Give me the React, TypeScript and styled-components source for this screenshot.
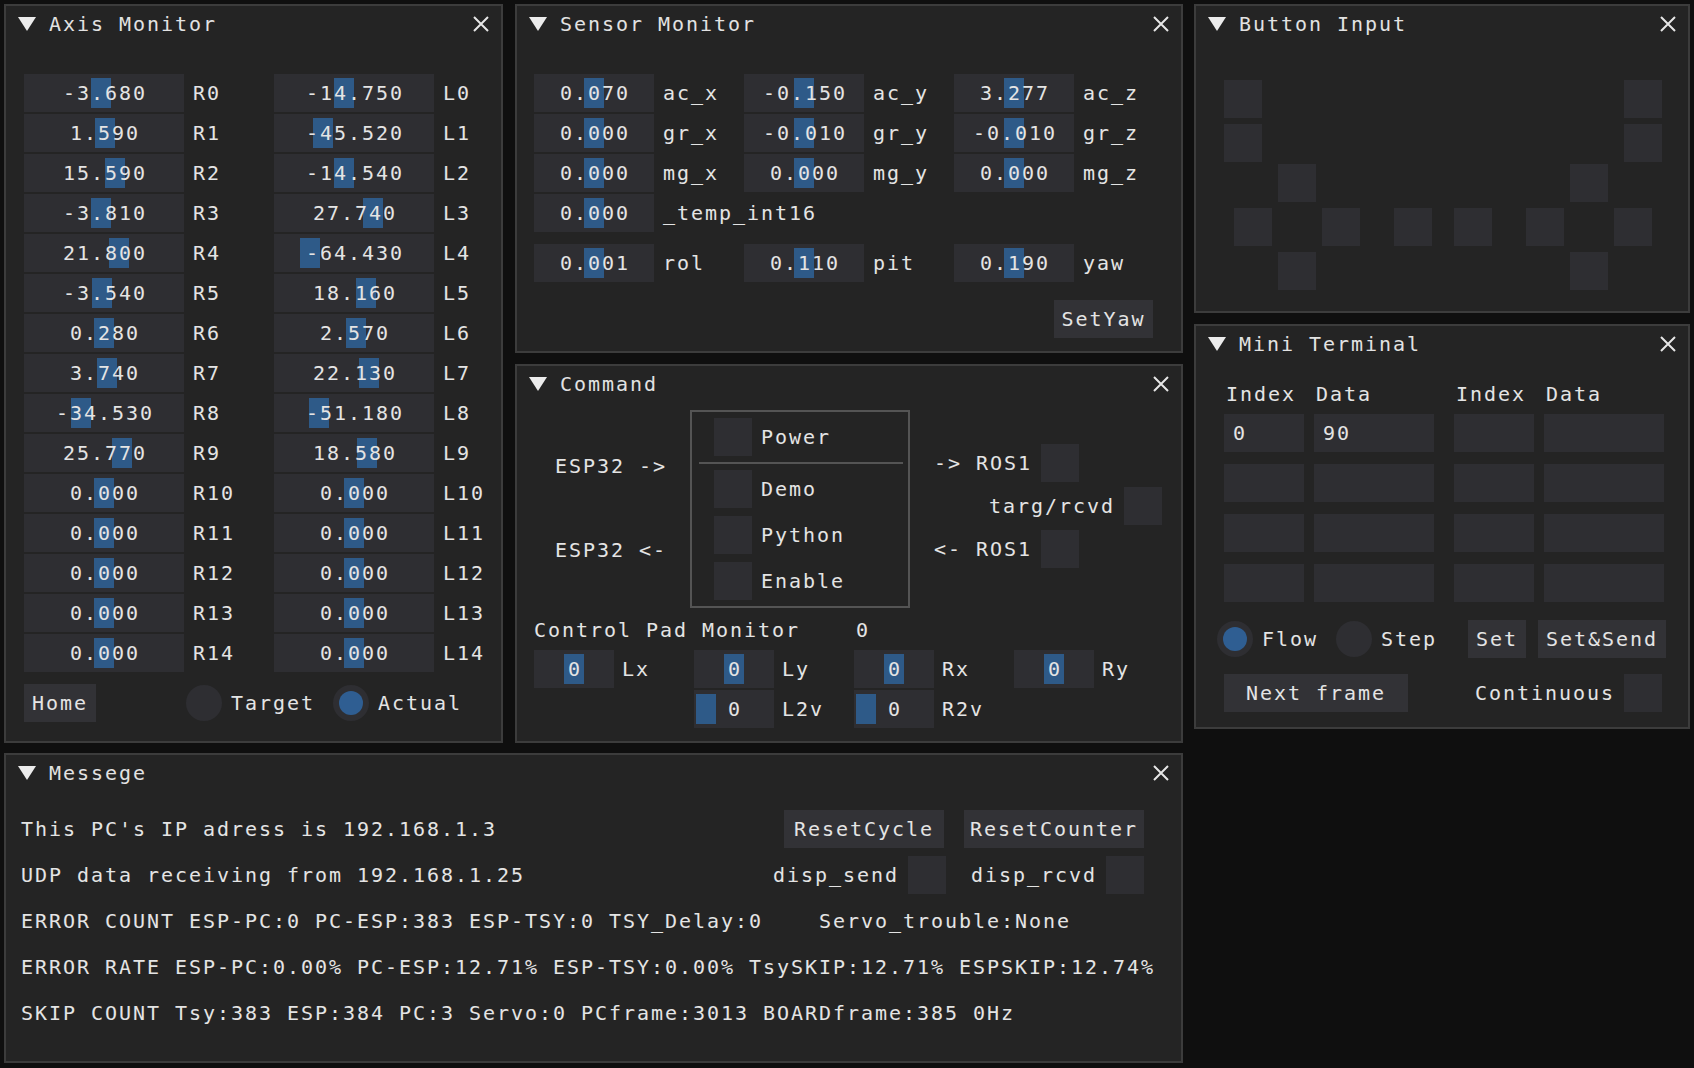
import React from "react";
import styled, { createGlobalStyle } from "styled-components";

const GlobalStyle = createGlobalStyle`
  html, body { margin: 0; padding: 0; background: #0f0f0f; }
  body {
    font-family: "DejaVu Sans Mono", "Liberation Mono", monospace;
    font-size: 20px;
    letter-spacing: 1.96px;
    color: #e4e4e4;
  }
  * { box-sizing: border-box; }
`;

// ---- data ----
const rightAxis = [-3.68, 1.59, 15.59, -3.81, 21.8, -3.54, 0.28, 3.74, -34.53, 25.77, 0, 0, 0, 0, 0];
const leftAxis = [-14.75, -45.52, -14.54, 27.74, -64.43, 18.16, 2.57, 22.13, -51.18, 18.58, 0, 0, 0, 0, 0];

const sensorRows: [number, string][][] = [
  [[0.07, "ac_x"], [-0.15, "ac_y"], [3.277, "ac_z"]],
  [[0, "gr_x"], [-0.01, "gr_y"], [-0.01, "gr_z"]],
  [[0, "mg_x"], [0, "mg_y"], [0, "mg_z"]],
  [[0, "_temp_int16"]],
];
const attitude: [number, string][] = [[0.001, "rol"], [0.11, "pit"], [0.19, "yaw"]];

// gamepad layout, coordinates inside the Button Input body
const padButtons = [
  [28, 38], [28, 82], [428, 38], [428, 82],
  [82, 122], [374, 122],
  [38, 166], [126, 166], [198, 166], [258, 166], [330, 166], [418, 166],
  [82, 210], [374, 210],
];

const fmt = (v: number) => (Object.is(v, -0) ? 0 : v).toFixed(3);

// ---- layout ----
const Screen = styled.div`
  width: 1694px;
  height: 1068px;
  padding: 4px;
  display: flex;
  gap: 11px;
`;

const Column = styled.div<{ $gap: number }>`
  display: flex;
  flex-direction: column;
  gap: ${(p) => p.$gap}px;
`;

const Row = styled.div<{ $gap: number }>`
  display: flex;
  gap: ${(p) => p.$gap}px;
`;

const Window = styled.section<{ $w: number; $h: number }>`
  width: ${(p) => p.$w}px;
  height: ${(p) => p.$h}px;
  background: #242424;
  border: 2px solid #3c3c3c;
  display: flex;
  flex-direction: column;
  overflow: hidden;
`;

const TitleBar = styled.div`
  height: 36px;
  flex: none;
  display: flex;
  align-items: center;
  padding: 0 12px 0 12px;
`;

const TitleText = styled.span`
  flex: 1;
  margin-left: 13px;
  color: #e2e2e2;
`;

const Body = styled.div<{ $pad: string }>`
  flex: 1;
  padding: ${(p) => p.$pad};
  position: relative;
`;

const Collapse = () => (
  <svg width="18" height="14" viewBox="0 0 18 14">
    <polygon points="0,0 18,0 9,14" fill="#ececec" />
  </svg>
);

const CloseIcon = () => (
  <svg width="16" height="16" viewBox="0 0 16 16">
    <path d="M1 1 L15 15 M15 1 L1 15" stroke="#e6e6e6" strokeWidth="2" />
  </svg>
);

const Panel: React.FC<{ title: string; w: number; h: number; pad: string; children: React.ReactNode }> = ({
  title, w, h, pad, children,
}) => (
  <Window $w={w} $h={h}>
    <TitleBar>
      <Collapse />
      <TitleText>{title}</TitleText>
      <CloseIcon />
    </TitleBar>
    <Body $pad={pad}>{children}</Body>
  </Window>
);

// ---- widgets ----
const Field = styled.div<{ $w: number }>`
  position: relative;
  width: ${(p) => p.$w}px;
  height: 38px;
  flex: none;
  background: #2e2e32;
  display: flex;
  align-items: center;
  justify-content: center;
  white-space: pre;
`;

const Grab = styled.div`
  position: absolute;
  top: 4px;
  bottom: 4px;
  width: 20px;
  background: #2e5a88;
`;

const FieldText = styled.span`
  position: relative;
  margin-right: -1.96px;
`;

const Slider: React.FC<{ w: number; frac: number; text: string }> = ({ w, frac, text }) => (
  <Field $w={w}>
    <Grab style={{ left: Math.round(2 + frac * (w - 24)) }} />
    <FieldText>{text}</FieldText>
  </Field>
);

const LabeledCell = styled.div<{ $gap: number }>`
  display: flex;
  align-items: center;
  gap: ${(p) => p.$gap}px;
  white-space: pre;
`;

const Button = styled.div<{ $w: number }>`
  width: ${(p) => p.$w}px;
  height: 38px;
  flex: none;
  background: #323236;
  display: flex;
  align-items: center;
  justify-content: center;
  white-space: pre;
`;

const Check = styled.div`
  width: 38px;
  height: 38px;
  flex: none;
  background: #2e2e32;
`;

const RadioDot = styled.span<{ $on?: boolean }>`
  width: 36px;
  height: 36px;
  flex: none;
  border-radius: 50%;
  background: #2e2e32;
  display: flex;
  align-items: center;
  justify-content: center;
  &::after {
    content: "";
    width: 24px;
    height: 24px;
    border-radius: 50%;
    background: ${(p) => (p.$on ? "#2f5e92" : "transparent")};
  }
`;

const RadioItem = styled.div`
  display: flex;
  align-items: center;
  gap: 9px;
`;

const Line = styled.div`
  height: 38px;
  display: flex;
  align-items: center;
  white-space: pre;
`;

// ---- Axis Monitor ----
const AxisGrid = styled.div`
  display: grid;
  grid-template-columns: 250px auto;
  row-gap: 2px;
`;

const AxisFooter = styled.div`
  margin-top: 12px;
  height: 38px;
  display: flex;
  align-items: center;
`;

const RadioGroup = styled.div`
  margin-left: 90px;
  display: flex;
  align-items: center;
  gap: 18px;
`;

const AxisMonitor = () => (
  <Panel title="Axis Monitor" w={499} h={739} pad="32px 0 0 18px">
    <AxisGrid>
      {rightAxis.map((r, i) => (
        <React.Fragment key={i}>
          <LabeledCell $gap={9}>
            <Slider w={160} frac={(r + 100) / 200} text={fmt(r)} />
            <span>R{i}</span>
          </LabeledCell>
          <LabeledCell $gap={9}>
            <Slider w={160} frac={(leftAxis[i] + 100) / 200} text={fmt(leftAxis[i])} />
            <span>L{i}</span>
          </LabeledCell>
        </React.Fragment>
      ))}
    </AxisGrid>
    <AxisFooter>
      <Button $w={72}>Home</Button>
      <RadioGroup>
        <RadioItem>
          <RadioDot />
          <span>Target</span>
        </RadioItem>
        <RadioItem>
          <RadioDot $on />
          <span>Actual</span>
        </RadioItem>
      </RadioGroup>
    </AxisFooter>
  </Panel>
);

// ---- Sensor Monitor ----
const SensorGrid = styled.div<{ $top?: number }>`
  display: grid;
  grid-template-columns: 210px 210px 210px;
  row-gap: 2px;
  margin-top: ${(p) => p.$top ?? 0}px;
`;

const RightActions = styled.div`
  margin-top: 18px;
  display: flex;
  justify-content: flex-end;
`;

const SensorCell: React.FC<{ v: number; label: string }> = ({ v, label }) => (
  <LabeledCell $gap={9}>
    <Slider w={120} frac={0.5} text={fmt(v)} />
    <span>{label}</span>
  </LabeledCell>
);

const SensorMonitor = () => (
  <Panel title="Sensor Monitor" w={668} h={349} pad="32px 28px 0 17px">
    <SensorGrid>
      {sensorRows.flatMap((row, r) =>
        row.map(([v, label], c) => <SensorCell key={`${r}-${c}`} v={v} label={label} />).concat(
          row.length < 3 ? [<div key={`${r}-pad1`} />, <div key={`${r}-pad2`} />] : []
        )
      )}
    </SensorGrid>
    <SensorGrid $top={12}>
      {attitude.map(([v, label]) => (
        <SensorCell key={label} v={v} label={label} />
      ))}
    </SensorGrid>
    <RightActions>
      <Button $w={99}>SetYaw</Button>
    </RightActions>
  </Panel>
);

// ---- Command ----
const CommandTop = styled.div`
  display: flex;
  align-items: flex-start;
`;

const ArrowCol = styled.div`
  width: 156px;
  padding: 37px 0 0 21px;
  display: flex;
  flex-direction: column;
  gap: 46px;
`;

const ModeBox = styled.div`
  width: 220px;
  height: 198px;
  border: 2px solid #545454;
  padding: 6px 5px 0 22px;
  display: flex;
  flex-direction: column;
`;

const ModeList = styled.div`
  display: flex;
  flex-direction: column;
  gap: 8px;
`;

const Separator = styled.div`
  height: 2px;
  margin: 6px 0 6px -15px;
  background: #545454;
`;

const RosCol = styled.div`
  margin: 34px 0 0 24px;
  display: flex;
  flex-direction: column;
  gap: 5px;
`;

const RosLine = styled.div<{ $indent?: number }>`
  height: 38px;
  display: flex;
  align-items: center;
  gap: 9px;
  padding-left: ${(p) => p.$indent ?? 0}px;
  white-space: pre;
`;

const PadTitle = styled.div`
  margin-top: 7px;
  height: 30px;
  display: flex;
  align-items: center;
  white-space: pre;
`;

const PadGrid = styled.div`
  margin-top: 5px;
  display: grid;
  grid-template-columns: repeat(4, 160px);
  row-gap: 2px;
`;

const PadCell = styled(LabeledCell)<{ $col?: number }>`
  grid-column: ${(p) => p.$col ?? "auto"};
`;

const ModeItem: React.FC<{ label: string }> = ({ label }) => (
  <LabeledCell $gap={9}>
    <Check />
    <span>{label}</span>
  </LabeledCell>
);

const Command = () => (
  <Panel title="Command" w={668} h={379} pad="8px 0 0 17px">
    <CommandTop>
      <ArrowCol>
        <Line>ESP32 -&gt;</Line>
        <Line>ESP32 &lt;-</Line>
      </ArrowCol>
      <ModeBox>
        <ModeItem label="Power" />
        <Separator />
        <ModeList>
          <ModeItem label="Demo" />
          <ModeItem label="Python" />
          <ModeItem label="Enable" />
        </ModeList>
      </ModeBox>
      <RosCol>
        <RosLine>
          <span>-&gt; ROS1</span>
          <Check />
        </RosLine>
        <RosLine $indent={55}>
          <span>targ/rcvd</span>
          <Check />
        </RosLine>
        <RosLine>
          <span>&lt;- ROS1</span>
          <Check />
        </RosLine>
      </RosCol>
    </CommandTop>
    <PadTitle>{"Control Pad Monitor    0"}</PadTitle>
    <PadGrid>
      {["Lx", "Ly", "Rx", "Ry"].map((l) => (
        <PadCell key={l} $gap={8}>
          <Slider w={80} frac={0.5} text="0" />
          <span>{l}</span>
        </PadCell>
      ))}
      <PadCell $gap={8} $col={2}>
        <Slider w={80} frac={0} text="0" />
        <span>L2v</span>
      </PadCell>
      <PadCell $gap={8} $col={3}>
        <Slider w={80} frac={0} text="0" />
        <span>R2v</span>
      </PadCell>
    </PadGrid>
  </Panel>
);

// ---- Button Input ----
const PadKey = styled.div<{ $x: number; $y: number }>`
  position: absolute;
  left: ${(p) => p.$x}px;
  top: ${(p) => p.$y}px;
  width: 38px;
  height: 38px;
  background: #2e2e32;
`;

const ButtonInput = () => (
  <Panel title="Button Input" w={496} h={309} pad="0">
    {padButtons.map(([x, y], i) => (
      <PadKey key={i} $x={x} $y={y} />
    ))}
  </Panel>
);

// ---- Mini Terminal ----
const TermGrid = styled.div`
  display: grid;
  grid-template-columns: 80px 120px 90px 120px;
  column-gap: 10px;
  row-gap: 12px;
`;

const TermHead = styled.div<{ $end?: boolean }>`
  height: 30px;
  width: ${(p) => (p.$end ? "80px" : "auto")};
  justify-self: ${(p) => (p.$end ? "end" : "stretch")};
  display: flex;
  align-items: center;
  padding-left: 2px;
`;

const TermField = styled.div<{ $end?: boolean }>`
  height: 38px;
  width: ${(p) => (p.$end ? "80px" : "auto")};
  justify-self: ${(p) => (p.$end ? "end" : "stretch")};
  background: #2e2e32;
  display: flex;
  align-items: center;
  padding-left: 9px;
`;

const TermHeader = styled(TermGrid)`
  margin-bottom: 5px;
`;

const TermRadioRow = styled.div`
  margin: 18px 0 0 -7px;
  height: 38px;
  display: flex;
  align-items: center;
`;

const TermRadios = styled.div`
  display: flex;
  align-items: center;
  gap: 18px;
  margin-right: 31px;
`;

const TermButtons = styled.div`
  display: flex;
  gap: 12px;
`;

const TermFooter = styled.div`
  margin-top: 16px;
  width: 438px;
  display: flex;
  justify-content: space-between;
  align-items: center;
`;

const termRows = [
  ["0", "90", "", ""],
  ["", "", "", ""],
  ["", "", "", ""],
  ["", "", "", ""],
];

const MiniTerminal = () => (
  <Panel title="Mini Terminal" w={496} h={405} pad="17px 0 0 28px">
    <TermHeader>
      <TermHead>Index</TermHead>
      <TermHead>Data</TermHead>
      <TermHead $end>Index</TermHead>
      <TermHead>Data</TermHead>
    </TermHeader>
    <TermGrid>
      {termRows.flatMap((row, r) =>
        row.map((v, c) => (
          <TermField key={`${r}-${c}`} $end={c === 2}>
            {v}
          </TermField>
        ))
      )}
    </TermGrid>
    <TermRadioRow>
      <TermRadios>
        <RadioItem>
          <RadioDot $on />
          <span>Flow</span>
        </RadioItem>
        <RadioItem>
          <RadioDot />
          <span>Step</span>
        </RadioItem>
      </TermRadios>
      <TermButtons>
        <Button $w={58}>Set</Button>
        <Button $w={128}>Set&amp;Send</Button>
      </TermButtons>
    </TermRadioRow>
    <TermFooter>
      <Button $w={184}>Next frame</Button>
      <LabeledCell $gap={9}>
        <span>Continuous</span>
        <Check />
      </LabeledCell>
    </TermFooter>
  </Panel>
);

// ---- Messege ----
const MsgList = styled.div`
  display: flex;
  flex-direction: column;
  gap: 8px;
`;

const MsgLine = styled.div`
  height: 38px;
  display: flex;
  align-items: center;
  justify-content: space-between;
  white-space: pre;
`;

const MsgActions = styled.div<{ $gap: number }>`
  display: flex;
  align-items: center;
  gap: ${(p) => p.$gap}px;
`;

const Messege = () => (
  <Panel title="Messege" w={1179} h={310} pad="19px 37px 0 15px">
    <MsgList>
      <MsgLine>
        <span>This PC's IP adress is 192.168.1.3</span>
        <MsgActions $gap={20}>
          <Button $w={160}>ResetCycle</Button>
          <Button $w={180}>ResetCounter</Button>
        </MsgActions>
      </MsgLine>
      <MsgLine>
        <span>UDP data receiving from 192.168.1.25</span>
        <MsgActions $gap={25}>
          <LabeledCell $gap={9}>
            <span>disp_send</span>
            <Check />
          </LabeledCell>
          <LabeledCell $gap={9}>
            <span>disp_rcvd</span>
            <Check />
          </LabeledCell>
        </MsgActions>
      </MsgLine>
      <MsgLine>
        <span>{"ERROR COUNT ESP-PC:0 PC-ESP:383 ESP-TSY:0 TSY_Delay:0    Servo_trouble:None"}</span>
      </MsgLine>
      <MsgLine>
        <span>ERROR RATE ESP-PC:0.00% PC-ESP:12.71% ESP-TSY:0.00% TsySKIP:12.71% ESPSKIP:12.74%</span>
      </MsgLine>
      <MsgLine>
        <span>SKIP COUNT Tsy:383 ESP:384 PC:3 Servo:0 PCframe:3013 BOARDframe:385 0Hz</span>
      </MsgLine>
    </MsgList>
  </Panel>
);

export default function App() {
  return (
    <>
      <GlobalStyle />
      <Screen>
        <Column $gap={10}>
          <Row $gap={12}>
            <AxisMonitor />
            <Column $gap={11}>
              <SensorMonitor />
              <Command />
            </Column>
          </Row>
          <Messege />
        </Column>
        <Column $gap={11}>
          <ButtonInput />
          <MiniTerminal />
        </Column>
      </Screen>
    </>
  );
}
